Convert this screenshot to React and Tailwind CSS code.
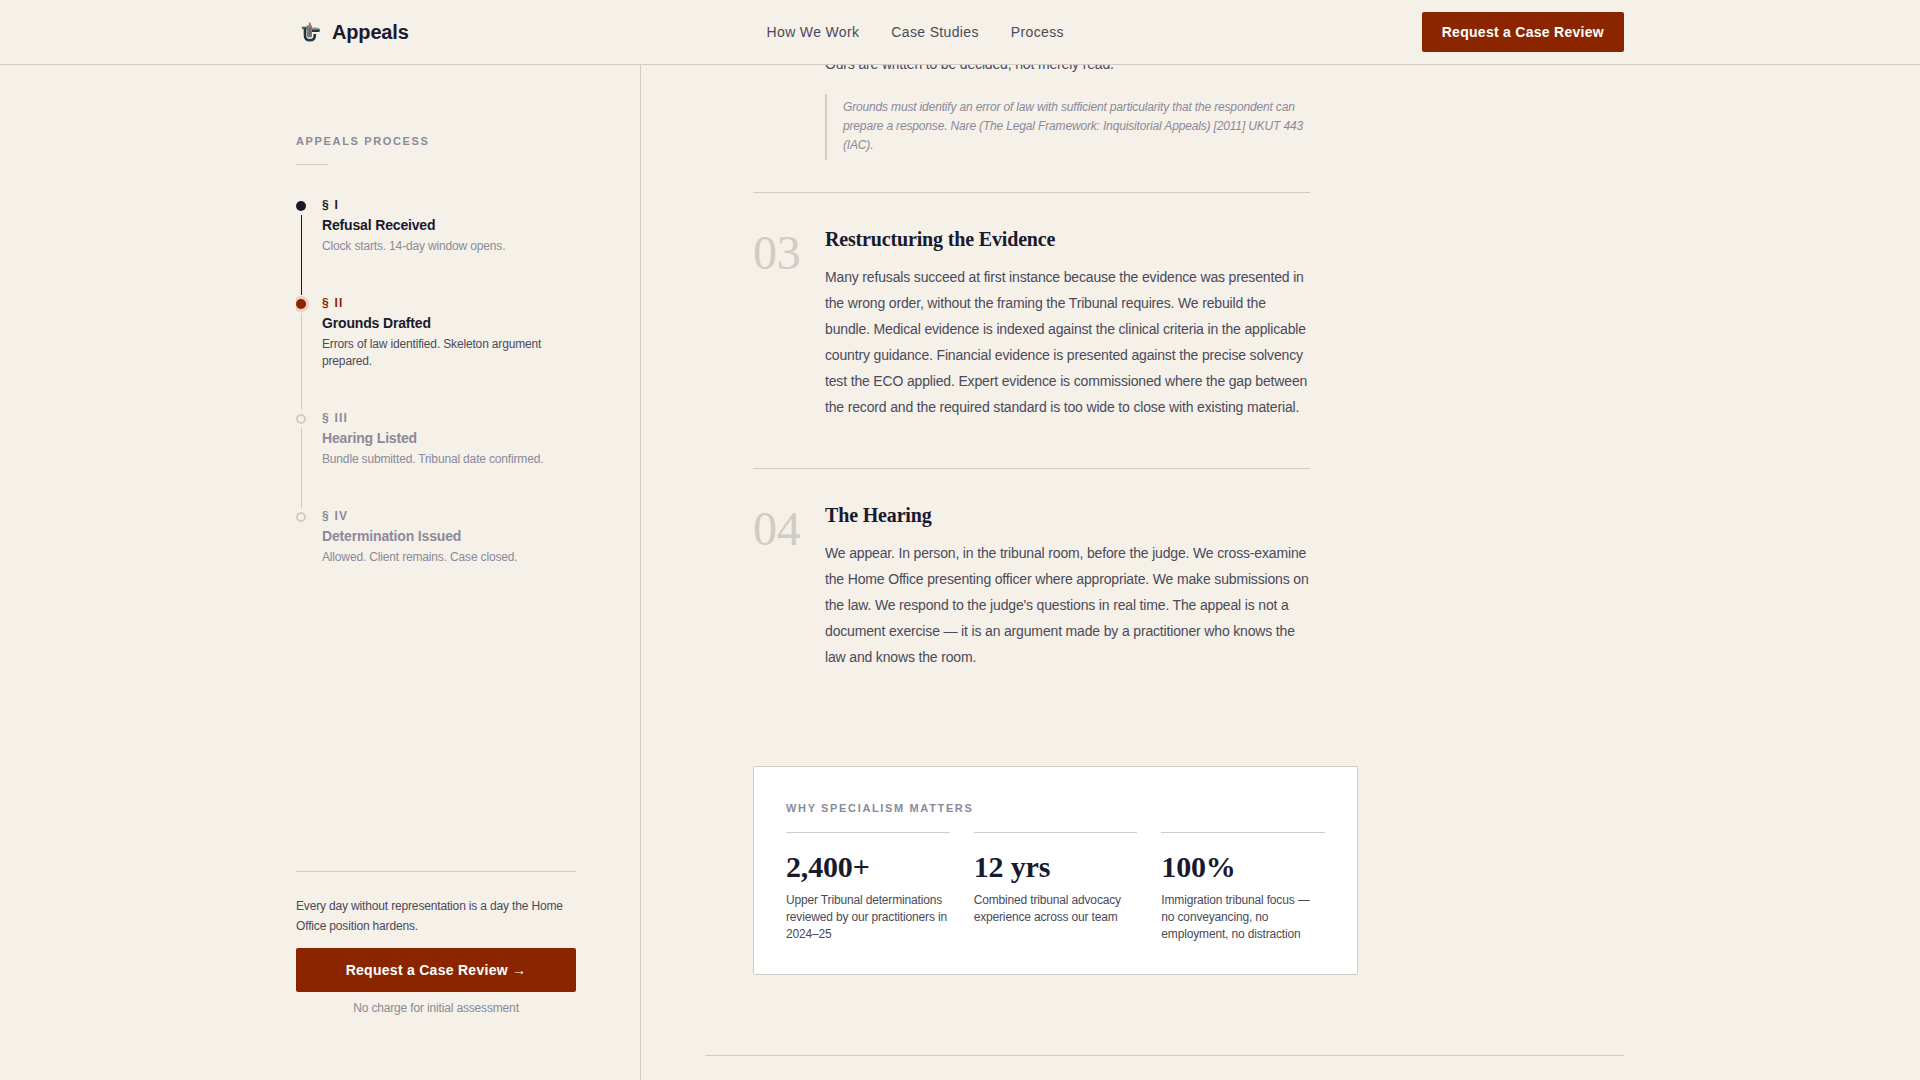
const steps = [
  { id: "I", title: "Refusal Received", text: "Clock starts. 14-day window opens.", state: "done" },
  { id: "II", title: "Grounds Drafted", text: "Errors of law identified. Skeleton argument prepared.", state: "active" },
  { id: "III", title: "Hearing Listed", text: "Bundle submitted. Tribunal date confirmed.", state: "upcoming" },
  { id: "IV", title: "Determination Issued", text: "Allowed. Client remains. Case closed.", state: "upcoming" },
];

const styles = {
  done: {
    dot: "bg-[#1a1a2e]",
    line: "bg-[#1a1a2e]",
    label: "text-[#1a1a2e]",
    title: "text-[#1a1a2e]",
    text: "text-[#8a8a9a]",
  },
  active: {
    dot: "bg-[#8b2500] ring-3 ring-[#efcdbf]",
    line: "bg-[#d0ccc5]",
    label: "text-[#8b2500]",
    title: "text-[#1a1a2e]",
    text: "text-[#4a4a5a]",
  },
  upcoming: {
    dot: "border-2 border-[#d0ccc5]",
    line: "bg-[#d0ccc5]",
    label: "text-[#8a8a9a]",
    title: "text-[#8a8a9a]",
    text: "text-[#8a8a9a]",
  },
};

const sections = [
  {
    number: "03",
    title: "Restructuring the Evidence",
    text: "Many refusals succeed at first instance because the evidence was presented in the wrong order, without the framing the Tribunal requires. We rebuild the bundle. Medical evidence is indexed against the clinical criteria in the applicable country guidance. Financial evidence is presented against the precise solvency test the ECO applied. Expert evidence is commissioned where the gap between the record and the required standard is too wide to close with existing material.",
  },
  {
    number: "04",
    title: "The Hearing",
    text: "We appear. In person, in the tribunal room, before the judge. We cross-examine the Home Office presenting officer where appropriate. We make submissions on the law. We respond to the judge's questions in real time. The appeal is not a document exercise — it is an argument made by a practitioner who knows the law and knows the room.",
  },
];

const stats = [
  { value: "2,400+", text: "Upper Tribunal determinations reviewed by our practitioners in 2024–25" },
  { value: "12 yrs", text: "Combined tribunal advocacy experience across our team" },
  { value: "100%", text: "Immigration tribunal focus — no conveyancing, no employment, no distraction" },
];

function Logo() {
  return (
    <svg viewBox="0 0 28 28" className="size-7" aria-hidden="true">
      <path d="M5.500 8.800H11v2.500H6.500z" fill="#4d5d64" />
      <path d="M9 10.500v7c0 3 2 4.800 4.900 4.800s4.900-1.800 4.900-4.800V16" fill="none" stroke="#263440" strokeWidth="2.600" />
      <path d="M10.700 7.500h5.300V18c0 1-.9 1.600-2.200 1.600-1.900 0-3.100-1-3.100-2.600z" fill="#73827f" />
      <path d="M16 11.300h8l-.6 2.800H16z" fill="#263440" />
      <path d="M16 9.500h4l3.600.7-.3 1.100H16z" fill="#8b9a98" />
      <path d="M12.700 15V6l1.200-2.200L15 6v9z" fill="#a97468" />
      <path d="M13.900 9.500v8.300" stroke="#4f5d60" strokeWidth="1" />
    </svg>
  );
}

function Header() {
  return (
    <header className="fixed inset-x-0 top-0 z-10 border-b border-[#d0ccc5] bg-[#f5f0e8]">
      <div className="mx-auto flex h-16 max-w-[1392px] items-center justify-between px-8">
        <a href="#" className="flex items-center gap-2 text-xl font-bold text-[#1a1a2e]">
          <Logo />
          Appeals
        </a>
        <nav className="flex gap-8 text-sm tracking-wide text-[#4a4a5a]">
          <a href="#work">How We Work</a>
          <a href="#cases">Case Studies</a>
          <a href="#process">Process</a>
        </nav>
        <button className="h-10 rounded-xs bg-[#8b2500] px-5 text-sm font-bold tracking-[0.02em] text-white">
          Request a Case Review
        </button>
      </div>
    </header>
  );
}

function Step({ step, last }) {
  const s = styles[step.state];
  return (
    <li className="flex gap-4">
      <div className="flex w-2.5 flex-col items-center gap-1 pt-1">
        <span className={`size-2.5 shrink-0 rounded-full ${s.dot}`} />
        {!last && <span className={`w-px flex-1 ${s.line}`} />}
      </div>
      <div className={last ? "" : "pb-10"}>
        <p className={`text-xs leading-4 font-bold tracking-[0.1em] ${s.label}`}>§ {step.id}</p>
        <h3 className={`mt-0.5 text-sm leading-5 font-bold ${s.title}`}>{step.title}</h3>
        <p className={`mt-[3px] text-xs leading-[17px] ${s.text}`}>{step.text}</p>
      </div>
    </li>
  );
}

function Sidebar() {
  return (
    <aside className="sticky top-0 flex h-screen w-[345px] shrink-0 flex-col justify-between border-r border-[#d0ccc5] pt-[133px] pr-16 pb-16">
      <div>
        <h2 className="text-[11px] leading-4 font-bold tracking-[0.15em] text-[#8a8a9a] uppercase">Appeals Process</h2>
        <div className="mt-[15px] h-px w-8 bg-[#d0ccc5]" />
        <ol className="mt-8 overflow-hidden">
          {steps.map((step, i) => (
            <Step key={step.id} step={step} last={i === steps.length - 1} />
          ))}
        </ol>
      </div>
      <div className="border-t border-[#d0ccc5] pt-6">
        <p className="text-xs leading-5 text-[#4a4a5a]">
          Every day without representation is a day the Home Office position hardens.
        </p>
        <button className="mt-3 h-11 w-full rounded-xs bg-[#8b2500] text-sm font-bold tracking-[0.02em] text-white">
          Request a Case Review →
        </button>
        <p className="mt-2 text-center text-xs leading-4 text-[#8a8a9a]">No charge for initial assessment</p>
      </div>
    </aside>
  );
}

export default function App() {
  return (
    <div className="h-screen overflow-hidden bg-[#f5f0e8] font-['Liberation_Sans',sans-serif] text-base tracking-[-0.01em]">
      <Header />
      <div className="mx-auto flex max-w-[1392px] px-8">
        <Sidebar />
        <main className="min-w-0 flex-1 pl-16">
          <div className="px-12 pt-[51px] pb-20">
            <div className="max-w-[557px]">
              <div className="pb-8 pl-[72px]">
                <p className="text-sm leading-[26px] text-[#4a4a5a]">Ours are written to be decided, not merely read.</p>
                <blockquote className="mt-[17px] border-l-2 border-[#d0ccc5] pt-1 pb-[5px] pl-4 text-xs leading-[19px] text-[#8a8a9a] italic">
                  Grounds must identify an error of law with sufficient particularity that the respondent can prepare a
                  response. Nare (The Legal Framework: Inquisitorial Appeals) [2011] UKUT 443 (IAC).
                </blockquote>
              </div>
              {sections.map((s) => (
                <section key={s.number} className="flex gap-6 border-t border-[#d0ccc5] pt-8 pb-12">
                  <span className="w-12 shrink-0 pt-1 font-['Liberation_Serif',serif] text-5xl text-[#d0ccc5]">
                    {s.number}
                  </span>
                  <div>
                    <h2 className="font-['Liberation_Serif',serif] text-xl leading-7 font-bold text-[#1a1a2e]">
                      {s.title}
                    </h2>
                    <p className="mt-[11px] text-sm leading-[26px] text-[#4a4a5a]">{s.text}</p>
                  </div>
                </section>
              ))}
            </div>
            <section className="mt-12 max-w-[605px] rounded-xs border border-[#d0ccc5] bg-white px-8 pt-[33px] pb-[31px]">
              <h2 className="text-[11px] leading-4 font-bold tracking-[0.15em] text-[#8a8a9a] uppercase">
                Why Specialism Matters
              </h2>
              <div className="mt-4 grid grid-cols-3 gap-6">
                {stats.map((s) => (
                  <div key={s.value} className="border-t border-[#d0ccc5] pt-4">
                    <p className="font-['Liberation_Serif',serif] text-3xl leading-9 font-bold text-[#1a1a2e]">
                      {s.value}
                    </p>
                    <p className="mt-[7px] text-xs leading-[17px] text-[#4a4a5a]">{s.text}</p>
                  </div>
                ))}
              </div>
            </section>
          </div>
          <hr className="border-[#d0ccc5]" />
        </main>
      </div>
    </div>
  );
}
